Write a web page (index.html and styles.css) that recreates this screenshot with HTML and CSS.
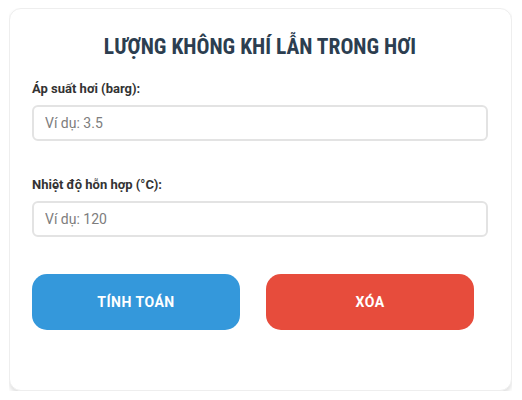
FILE: index.html
```html
<!DOCTYPE html>
<html lang="vi">
<head>
    <meta charset="UTF-8">
    <meta name="viewport" content="width=device-width, initial-scale=1.0">
    <title>Lượng không khí lẫn trong hơi</title>
    <link rel="stylesheet" href="styles.css">
</head>
<body>
    <div class="card">
        <h2>LƯỢNG KHÔNG KHÍ LẪN TRONG HƠI</h2>
        <div class="field">
            <label for="pressure">Áp suất hơi (barg):</label>
            <input type="number" id="pressure" placeholder="Ví dụ: 3.5">
        </div>
        <div class="field">
            <label for="temp">Nhiệt độ hỗn hợp (°C):</label>
            <input type="number" id="temp" placeholder="Ví dụ: 120">
        </div>
        <div class="buttons">
            <button class="btn calc">TÍNH TOÁN</button>
            <button class="btn clear">XÓA</button>
        </div>
    </div>
</body>
</html>
```

FILE: styles.css
```css
body {
    font-family: Roboto, 'Liberation Sans', sans-serif;
    margin: 8px 10px 8px 9px;
    background: #fff;
}

.card {
    background: #fff;
    border: 1px solid #eee;
    border-radius: 12px;
    box-shadow: 0 3px 4px rgba(0, 0, 0, 0.12);
    padding: 25px 23px 60px 22px;
}

h2 {
    font-family: 'Roboto Condensed', Roboto, sans-serif;
    font-stretch: condensed;
    font-size: 21.5px;
    font-weight: 700;
    color: #2c3e50;
    text-align: center;
    margin: 0 0 22px;
}

.field {
    margin-bottom: 36px;
}

label {
    display: block;
    font-size: 13px;
    font-weight: 700;
    color: #333;
    margin-bottom: 9px;
}

input {
    box-sizing: border-box;
    width: 100%;
    height: 36px;
    padding: 0 11px;
    border: 2px solid #e3e3e3;
    border-radius: 6px;
    font-family: Roboto, sans-serif;
    font-size: 14px;
}

input::placeholder {
    color: #7d7d7d;
}

.buttons {
    display: flex;
    gap: 26px;
    margin-top: 37px;
}

.btn {
    width: 208px;
    height: 56px;
    border: none;
    border-radius: 15px;
    color: #fff;
    font-family: Roboto, sans-serif;
    font-size: 14px;
    font-weight: 700;
    letter-spacing: 0.5px;
    cursor: pointer;
}

.calc {
    background: #3498db;
}

.clear {
    background: #e74c3c;
}
```
